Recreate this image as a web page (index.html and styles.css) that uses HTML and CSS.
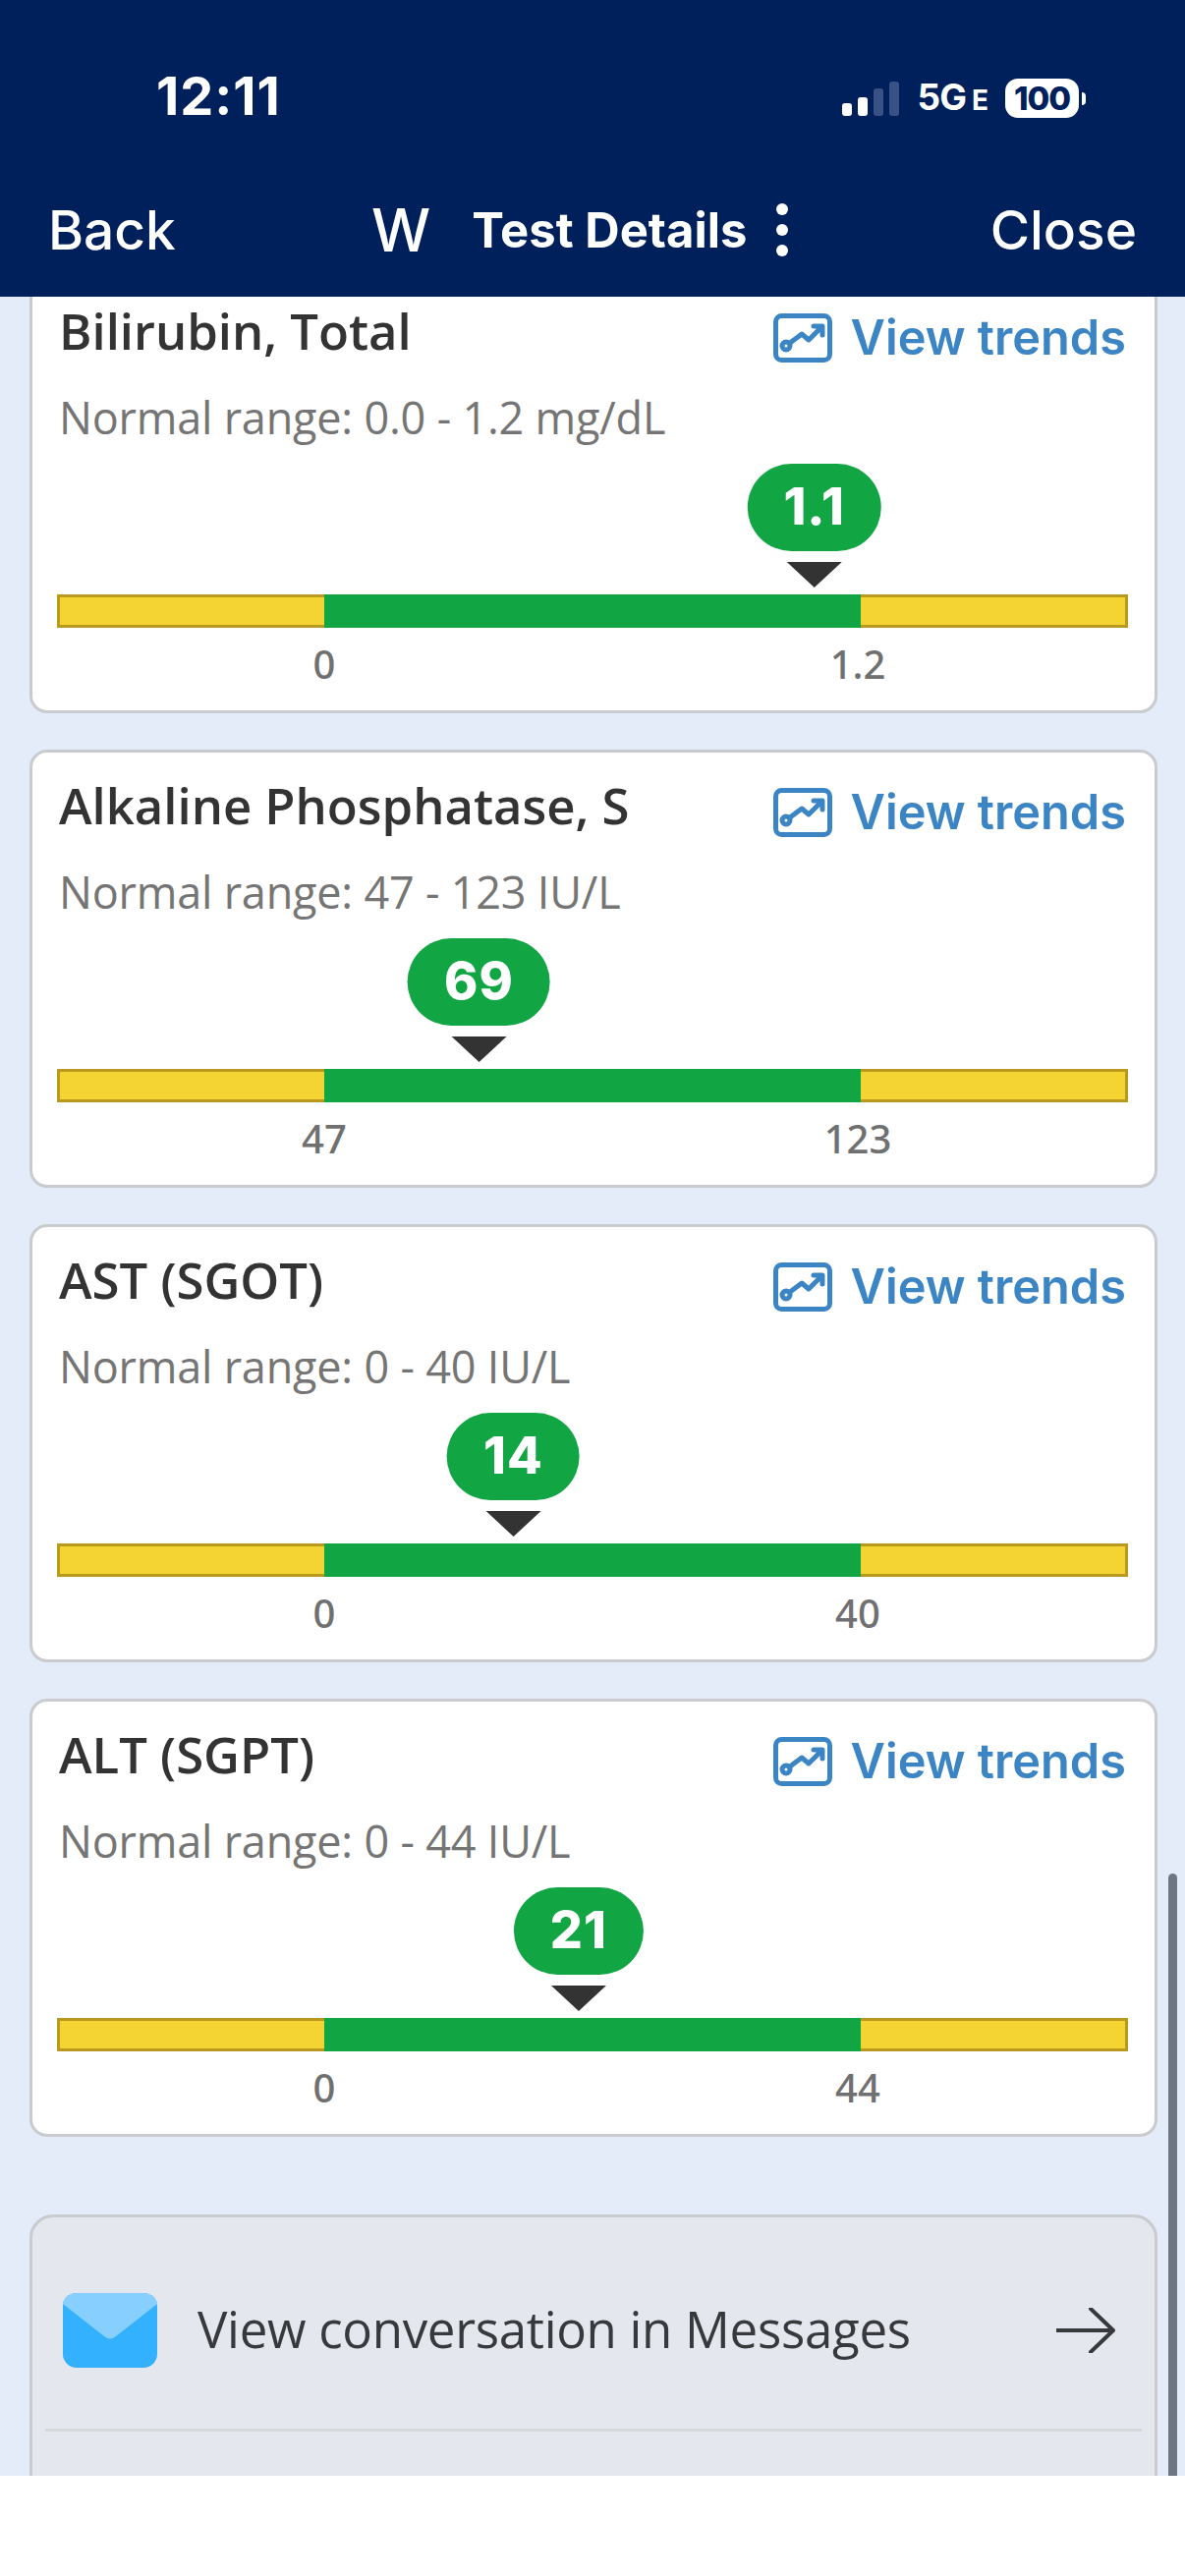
FILE: index.html
```html
<!DOCTYPE html>
<html lang="en">
<head>
    <meta charset="UTF-8">
    <meta name="viewport" content="width=device-width, initial-scale=1.0">
    <title>Test Details</title>
    <link rel="stylesheet" href="styles.css">
</head>
<body>

    <header class="top">
        <div class="status">
            <span class="time">12:11</span>
            <div class="status-right">
                <div class="signal">
                    <i class="s1"></i><i class="s2"></i><i class="s3"></i><i class="s4"></i>
                </div>
                <span class="net">5G<small>E</small></span>
                <div class="battery"><span>100</span></div>
                <i class="nub"></i>
            </div>
        </div>
        <nav class="nav">
            <span class="nav-link">Back</span>
            <div class="nav-mid">
                <span class="logo">W</span>
                <span class="nav-title">Test Details</span>
                <div class="dots"><i></i><i></i><i></i></div>
            </div>
            <span class="nav-link">Close</span>
        </nav>
    </header>

    <main class="content">
        <div class="list">

            <section class="card">
                <div class="card-head">
                    <h3>Bilirubin, Total</h3>
                    <span class="trends">
                        <svg class="trend-icon" viewBox="0 0 60 50"><rect x="2.5" y="2.5" width="55" height="45" rx="6"/><circle cx="13" cy="33" r="4"/><path d="M17 30 L29 21 L36 27 L49 14 M41 13 H50 V22"/></svg>
                        View trends
                    </span>
                </div>
                <p class="range">Normal range: 0.0 - 1.2 mg/dL</p>
                <div class="marker-area">
                    <div class="marker" style="left: 70.7%">
                        <span class="pill">1.1</span>
                        <i class="arrow"></i>
                    </div>
                </div>
                <div class="bar"><i class="low"></i><i class="ok"></i><i class="high"></i></div>
                <div class="ticks"><span>0</span><span>1.2</span></div>
            </section>

            <section class="card">
                <div class="card-head">
                    <h3>Alkaline Phosphatase, S</h3>
                    <span class="trends">
                        <svg class="trend-icon" viewBox="0 0 60 50"><rect x="2.5" y="2.5" width="55" height="45" rx="6"/><circle cx="13" cy="33" r="4"/><path d="M17 30 L29 21 L36 27 L49 14 M41 13 H50 V22"/></svg>
                        View trends
                    </span>
                </div>
                <p class="range">Normal range: 47 - 123 IU/L</p>
                <div class="marker-area">
                    <div class="marker" style="left: 39.4%">
                        <span class="pill">69</span>
                        <i class="arrow"></i>
                    </div>
                </div>
                <div class="bar"><i class="low"></i><i class="ok"></i><i class="high"></i></div>
                <div class="ticks"><span>47</span><span>123</span></div>
            </section>

            <section class="card">
                <div class="card-head">
                    <h3>AST (SGOT)</h3>
                    <span class="trends">
                        <svg class="trend-icon" viewBox="0 0 60 50"><rect x="2.5" y="2.5" width="55" height="45" rx="6"/><circle cx="13" cy="33" r="4"/><path d="M17 30 L29 21 L36 27 L49 14 M41 13 H50 V22"/></svg>
                        View trends
                    </span>
                </div>
                <p class="range">Normal range: 0 - 40 IU/L</p>
                <div class="marker-area">
                    <div class="marker" style="left: 42.6%">
                        <span class="pill">14</span>
                        <i class="arrow"></i>
                    </div>
                </div>
                <div class="bar"><i class="low"></i><i class="ok"></i><i class="high"></i></div>
                <div class="ticks"><span>0</span><span>40</span></div>
            </section>

            <section class="card">
                <div class="card-head">
                    <h3>ALT (SGPT)</h3>
                    <span class="trends">
                        <svg class="trend-icon" viewBox="0 0 60 50"><rect x="2.5" y="2.5" width="55" height="45" rx="6"/><circle cx="13" cy="33" r="4"/><path d="M17 30 L29 21 L36 27 L49 14 M41 13 H50 V22"/></svg>
                        View trends
                    </span>
                </div>
                <p class="range">Normal range: 0 - 44 IU/L</p>
                <div class="marker-area">
                    <div class="marker" style="left: 48.7%">
                        <span class="pill">21</span>
                        <i class="arrow"></i>
                    </div>
                </div>
                <div class="bar"><i class="low"></i><i class="ok"></i><i class="high"></i></div>
                <div class="ticks"><span>0</span><span>44</span></div>
            </section>

            <section class="messages">
                <div class="msg-row">
                    <svg class="mail" viewBox="0 0 96 76">
                        <rect width="96" height="76" rx="14" fill="#33b1ff"/>
                        <path d="M0 11 Q1 1 14 0 H82 Q95 1 96 11 L54 44 Q48 49 42 44 Z" fill="#87cfff"/>
                    </svg>
                    <span class="msg-text">View conversation in Messages</span>
                    <svg class="go" viewBox="0 0 60 46"><path d="M1 23 H58 M35 1 L58 23 L35 45"/></svg>
                </div>
                <div class="msg-rule"></div>
                <div class="msg-row"></div>
            </section>

        </div>
        <div class="scrollbar"></div>
    </main>

    <div class="foot"></div>

</body>
</html>
```

FILE: styles.css
```css
* {
    margin: 0;
    padding: 0;
    box-sizing: border-box;
}

body {
    width: 1206px;
    height: 2622px;
    display: flex;
    flex-direction: column;
    overflow: hidden;
    background: #fff;
    font-family: 'Open Sans', 'Noto Sans', sans-serif;
}

i {
    display: block;
}

/* header */
.top {
    height: 302px;
    background: #00205b;
    color: #fff;
    font-family: 'Inter', sans-serif;
    flex-shrink: 0;
}

.status {
    height: 198px;
    padding: 66px 101px 0 159px;
    display: flex;
    justify-content: space-between;
    align-items: flex-start;
}

.time {
    font-size: 54px;
    font-weight: 700;
    line-height: 64px;
    letter-spacing: 1px;
}

.status-right {
    display: flex;
    align-items: center;
    margin-top: 14px;
}

.signal {
    display: flex;
    align-items: flex-end;
    gap: 6px;
    height: 36px;
}

.signal i {
    width: 10px;
    border-radius: 3px;
    background: #fff;
}

.s1 { height: 13px; }
.s2 { height: 19px; }
.s3 { height: 28px; background: #3a5185 !important; }
.s4 { height: 35px; background: #3a5185 !important; }

.net {
    font-size: 37px;
    font-weight: 700;
    margin-left: 19px;
    line-height: 36px;
    letter-spacing: -1px;
}

.net small {
    font-size: 28px;
    margin-left: 6px;
}

.battery {
    width: 75px;
    height: 40px;
    margin-left: 18px;
    border-radius: 13px;
    background: #fff;
    color: #00205b;
    font-size: 33px;
    font-weight: 800;
    line-height: 40px;
    text-align: center;
    letter-spacing: -1px;
}

.nub {
    width: 4px;
    height: 13px;
    margin-left: 3px;
    background: #fff;
    border-radius: 0 4px 4px 0;
}

.nav {
    padding: 0 49px;
    display: flex;
    justify-content: space-between;
    align-items: center;
    height: 72px;
}

.nav-link {
    font-size: 55px;
    font-weight: 500;
}

.nav-mid {
    display: flex;
    align-items: center;
    margin-left: -6px;
}

.logo {
    font-size: 60px;
    font-weight: 500;
    margin-right: 42px;
}

.nav-title {
    font-size: 49px;
    font-weight: 700;
}

.dots {
    margin-left: 30px;
    display: flex;
    flex-direction: column;
    gap: 9px;
}

.dots i {
    width: 12px;
    height: 12px;
    border-radius: 50%;
    background: #fff;
}

/* scrolled content */
.content {
    position: relative;
    height: 2218px;
    flex-shrink: 0;
    overflow: hidden;
    background: #e4ebf9;
}

.list {
    margin-top: -22px;
    padding: 0 28px 0 30px;
    display: flex;
    flex-direction: column;
    gap: 37px;
}

.card {
    height: 446px;
    padding: 0 27px 0 25px;
    background: #fff;
    border: 3px solid #c9cbce;
    border-radius: 18px;
}

.card-head {
    height: 88px;
    padding: 24px 2px 0 2px;
    display: flex;
    justify-content: space-between;
    align-items: flex-start;
}

.card-head h3 {
    font-size: 50.8px;
    font-weight: 600;
    line-height: 60px;
    color: #333;
}

.trends {
    display: flex;
    align-items: center;
    gap: 19px;
    margin-top: 7px;
    font-family: 'Inter', sans-serif;
    font-size: 48.7px;
    font-weight: 600;
    line-height: 60px;
    color: #3c85c5;
}

.trend-icon {
    width: 60px;
    height: 50px;
    fill: none;
    stroke: #3c85c5;
    stroke-width: 5;
    stroke-linecap: round;
    stroke-linejoin: round;
}

.range {
    padding-left: 2px;
    margin-top: 26px;
    font-size: 45px;
    line-height: 56px;
    letter-spacing: -0.2px;
    color: #757575;
}

.marker-area {
    position: relative;
    height: 152px;
}

.marker {
    position: absolute;
    bottom: 7px;
    transform: translateX(-50%);
    display: flex;
    flex-direction: column;
    align-items: center;
}

.pill {
    height: 89px;
    padding: 0 37px;
    border-radius: 45px;
    background: #12a544;
    color: #fff;
    font-family: 'Inter', sans-serif;
    font-size: 52px;
    font-weight: 800;
    line-height: 87px;
    letter-spacing: 1px;
}

.arrow {
    margin-top: 11px;
    width: 0;
    height: 0;
    border-left: 28px solid transparent;
    border-right: 28px solid transparent;
    border-top: 26px solid #333;
}

.bar {
    height: 34px;
    display: grid;
    grid-template-columns: 272px 546px 1fr;
}

.low, .high {
    background: #f4d433;
    border: 3px solid #b99a1e;
}

.low { border-right: none; }
.high { border-left: none; }

.ok {
    background: #12a544;
}

.ticks {
    display: grid;
    grid-template-columns: 272px 543px 1fr;
    margin-top: 11px;
    font-family: 'Noto Sans', sans-serif;
    font-size: 40px;
    font-weight: 500;
    line-height: 52px;
    color: #707070;
}

.ticks span {
    grid-column-start: 2;
    justify-self: start;
    transform: translateX(-50%);
}

.ticks span + span {
    grid-column-start: 3;
}

.messages {
    margin-top: 42px;
    border: 3px solid #c9cbce;
    border-radius: 24px;
    background: #e4e7ee;
}

.msg-row {
    height: 215px;
    padding: 14px 40px 0 31px;
    display: flex;
    align-items: center;
}

.mail {
    width: 96px;
    height: 76px;
    flex-shrink: 0;
}

.msg-text {
    margin-left: 41px;
    margin-top: -4px;
    flex: 1;
    font-size: 51px;
    letter-spacing: -0.3px;
    color: #37393d;
}

.go {
    width: 60px;
    height: 46px;
    fill: none;
    stroke: #37393d;
    stroke-width: 4;
    stroke-linecap: round;
    stroke-linejoin: round;
}

.msg-rule {
    height: 3px;
    margin: 0 13px;
    background: #d5d7db;
}

.scrollbar {
    position: absolute;
    top: 1605px;
    right: 8px;
    width: 9px;
    height: 726px;
    border-radius: 5px;
    background: #6e7583;
}

.foot {
    flex: 1;
    background: #fff;
}
```
